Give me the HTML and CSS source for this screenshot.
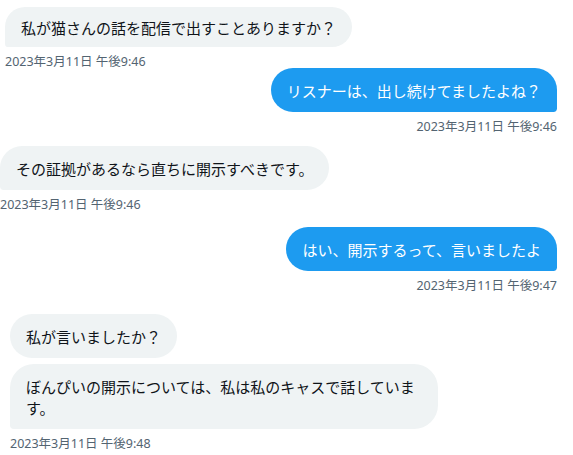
FILE: index.html
```html
<!DOCTYPE html>
<html lang="ja">
<head>
<meta charset="utf-8">
<link rel="stylesheet" href="styles.css">
</head>
<body>
<div class="chat">
  <div class="group in g1">
    <div class="bubble gray last short">私が猫さんの話を配信で出すことありますか？</div>
    <div class="time">2023年3月11日 午後9:46</div>
  </div>
  <div class="group out g2">
    <div class="bubble blue last">リスナーは、出し続けてましたよね？</div>
    <div class="time">2023年3月11日 午後9:46</div>
  </div>
  <div class="group in g3">
    <div class="bubble gray last">その証拠があるなら直ちに開示すべきです。</div>
    <div class="time">2023年3月11日 午後9:46</div>
  </div>
  <div class="group out g4">
    <div class="bubble blue last">はい、開示するって、言いましたよ</div>
    <div class="time">2023年3月11日 午後9:47</div>
  </div>
  <div class="group in g5">
    <div class="bubble gray">私が言いましたか？</div>
    <div class="bubble gray last">ぼんぴいの開示については、私は私のキャスで話しています。</div>
    <div class="time">2023年3月11日 午後9:48</div>
  </div>
</div>
</body>
</html>
```
FILE: styles.css
```css
html, body {
  margin: 0;
  padding: 0;
  background: #ffffff;
}
.chat {
  width: 573px;
  display: flex;
  flex-direction: column;
  font-family: "Noto Sans CJK JP", "Noto Sans", sans-serif;
}
.group {
  display: flex;
  flex-direction: column;
  gap: 6px;
}
.group.in { align-items: flex-start; }
.group.out { align-items: flex-end; padding-right: 16px; }
.g1 { padding-left: 5px; padding-top: 7px; }
.g2 { margin-top: -1px; }
.g3 { margin-top: 12px; }
.g4 { margin-top: 15px; }
.g5 { padding-left: 10px; margin-top: 21px; }
.bubble {
  box-sizing: border-box;
  padding: 12px 16px 11px;
  font-size: 15px;
  line-height: 21px;
  border-radius: 24px;
  max-width: 428px;
}
.bubble.short { padding: 10px 16px 9px; }
.bubble.gray {
  background: #eff3f4;
  color: #0f1419;
}
.bubble.gray.last { border-bottom-left-radius: 4px; }
.bubble.blue {
  background: #1d9bf0;
  color: #ffffff;
}
.bubble.blue.last { border-bottom-right-radius: 4px; }
.time {
  font-family: "Noto Sans", "Noto Sans CJK JP", sans-serif;
  font-size: 12.5px;
  line-height: 14px;
  color: #536471;
  margin-top: 2px;
}
```
